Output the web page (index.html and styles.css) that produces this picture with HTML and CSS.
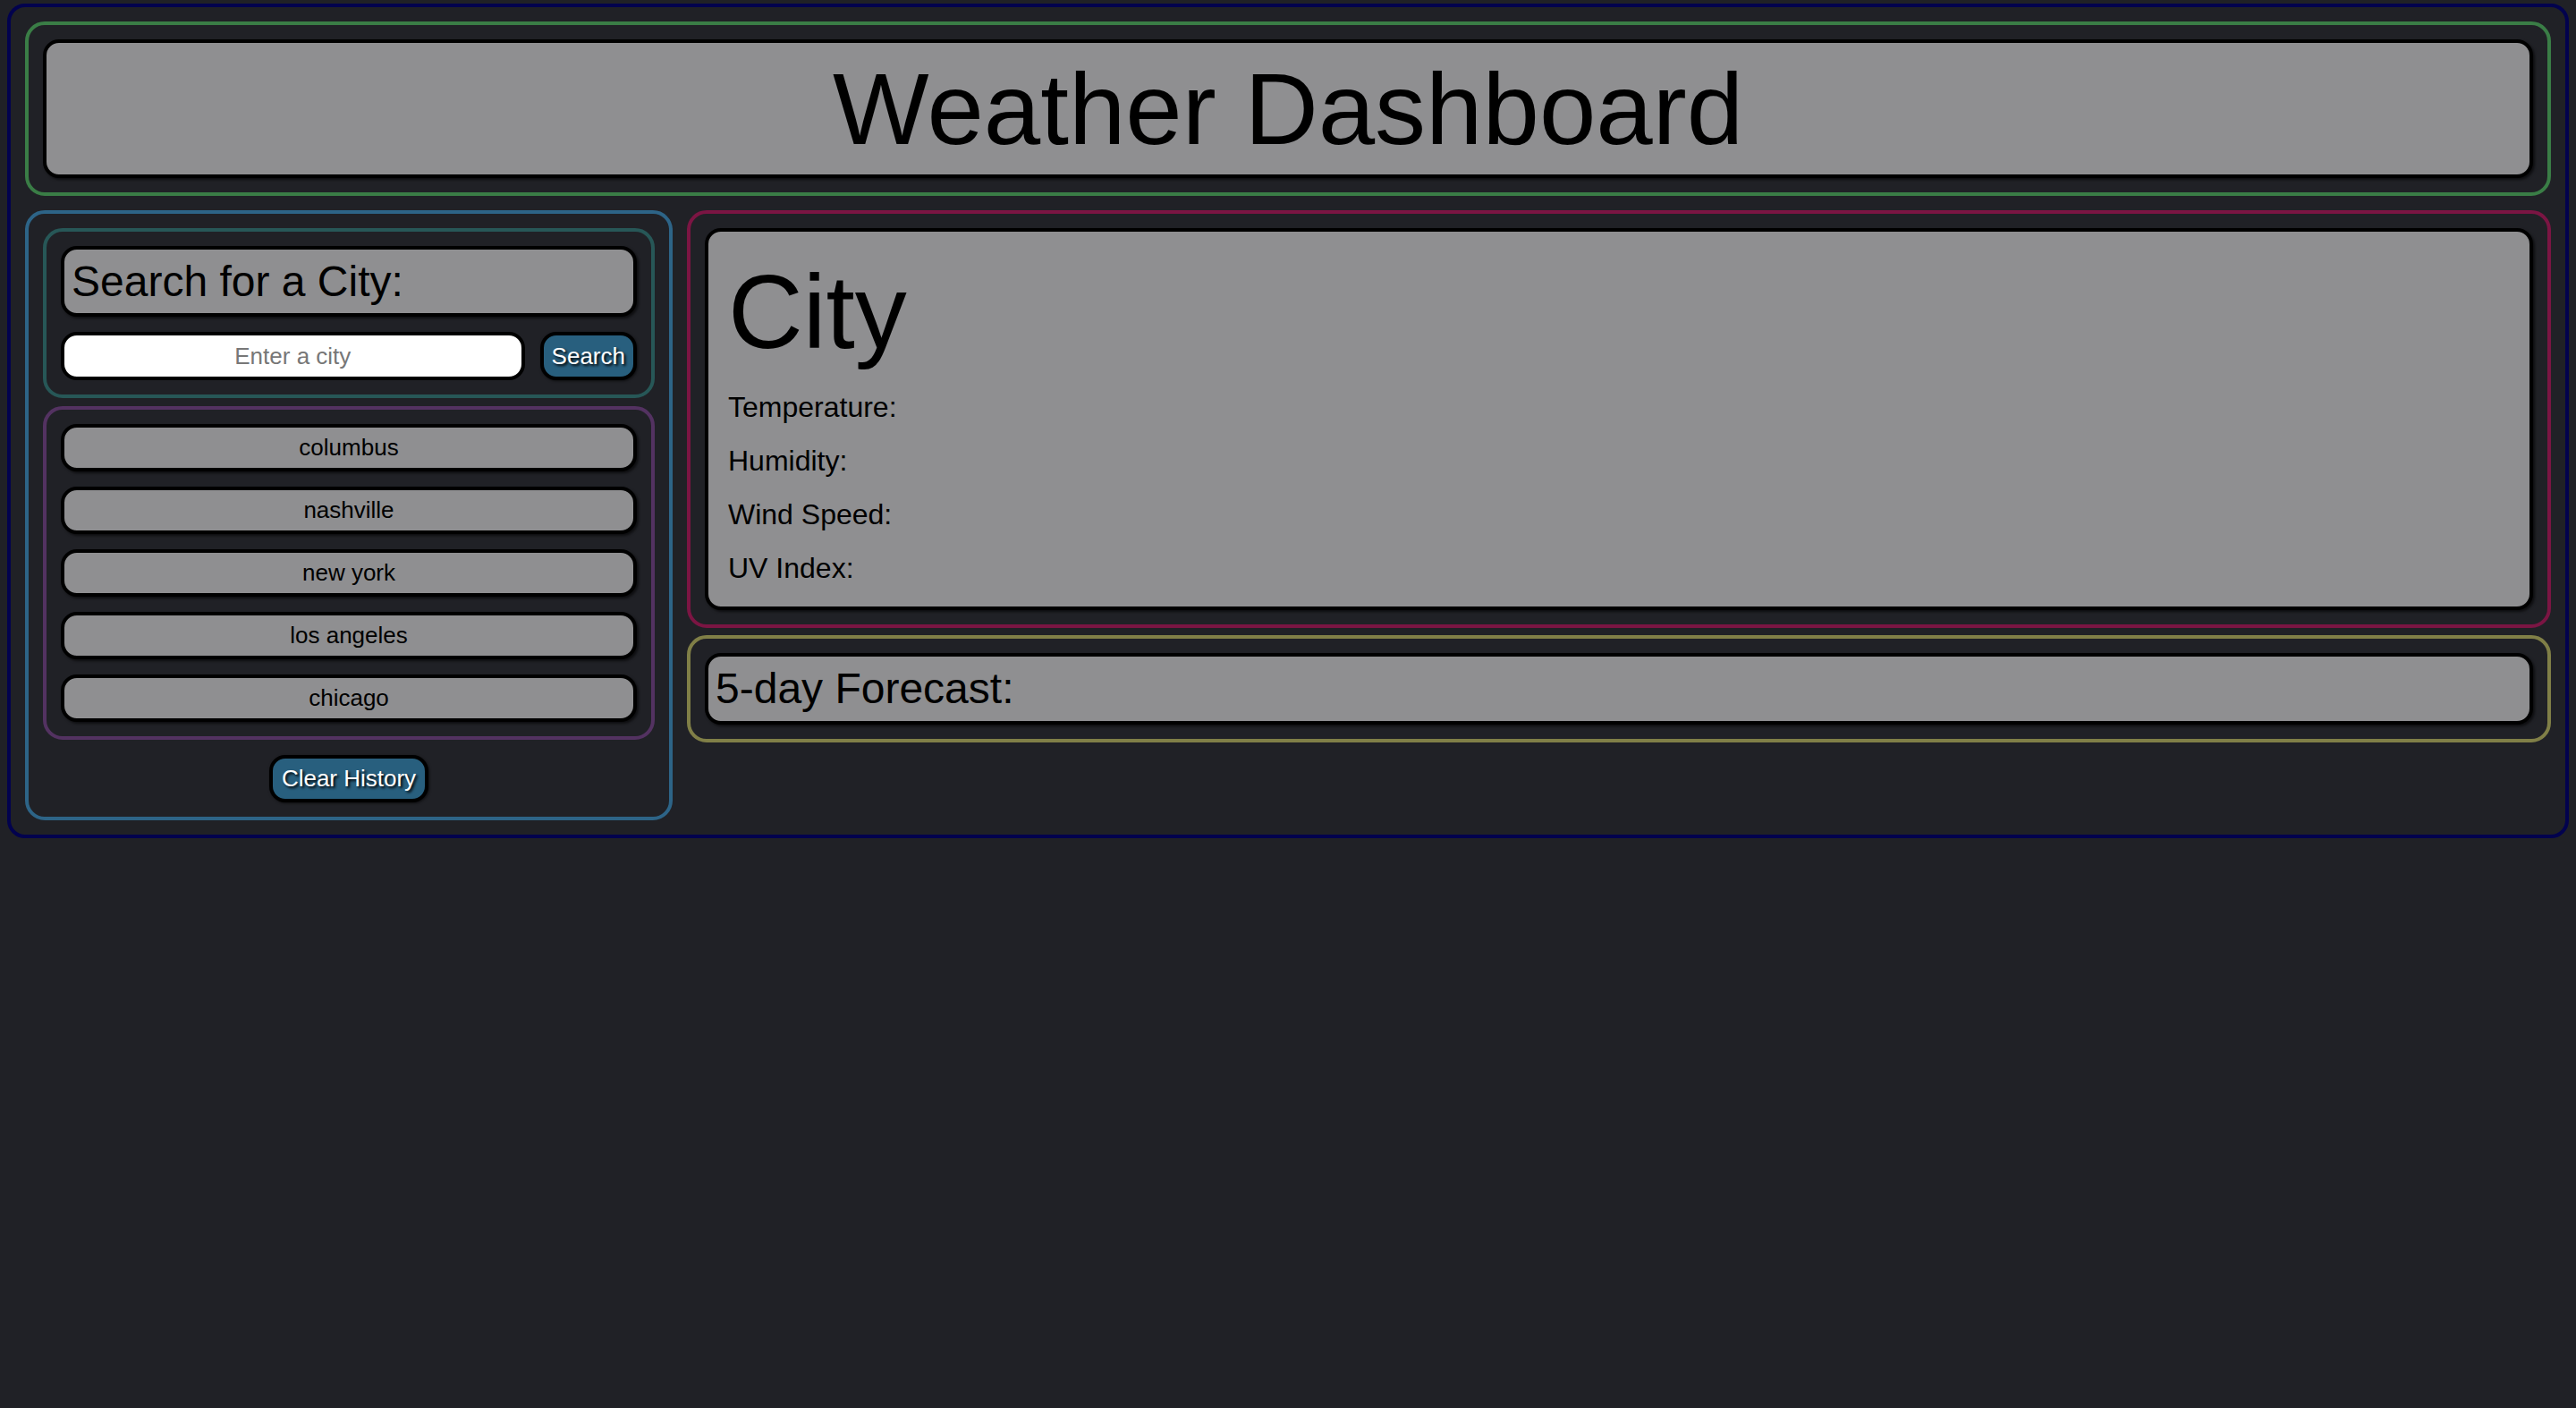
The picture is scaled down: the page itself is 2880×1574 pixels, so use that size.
FILE: index.html
```html
<!DOCTYPE html>
<html lang="en">
<head>
<meta charset="utf-8">
<title>Weather Dashboard</title>
<link rel="stylesheet" href="styles.css">
</head>
<body>
<div class="app">
  <header class="header">
    <h1 class="title">Weather Dashboard</h1>
  </header>
  <div class="content">
    <aside class="sidebar">
      <section class="search">
        <h2 class="panel-heading">Search for a City:</h2>
        <div class="search-row">
          <input class="city-input" type="text" placeholder="Enter a city">
          <button class="btn">Search</button>
        </div>
      </section>
      <section class="history">
        <button class="history-item">columbus</button>
        <button class="history-item">nashville</button>
        <button class="history-item">new york</button>
        <button class="history-item">los angeles</button>
        <button class="history-item">chicago</button>
      </section>
      <button class="btn clear">Clear History</button>
    </aside>
    <main class="main">
      <section class="current">
        <div class="current-card">
          <h1 class="city-name">City</h1>
          <p class="stat">Temperature:</p>
          <p class="stat">Humidity:</p>
          <p class="stat">Wind Speed:</p>
          <p class="stat">UV Index:</p>
        </div>
      </section>
      <section class="forecast">
        <h2 class="panel-heading">5-day Forecast:</h2>
      </section>
    </main>
  </div>
</div>
</body>
</html>
```
FILE: styles.css
```css
* {
  box-sizing: border-box;
}

html {
  background: #202126;
}

body {
  margin: 4px 8px 8px;
  background: #202126;
  font-family: "Liberation Sans", Arial, Helvetica, sans-serif;
  color: #000;
}

.app {
  border: 4px solid #02024e;
  border-radius: 20px;
  padding: 16px;
}

.header {
  border: 4px solid #3a7d46;
  border-radius: 22px;
  padding: 16px;
}

.title {
  margin: 0;
  background: #8f8f91;
  border: 4px solid #000;
  border-radius: 18px;
  box-shadow: 2px 2px 3px rgba(0, 0, 0, 0.6);
  padding: 8px;
  text-align: center;
  font-size: 114px;
  font-weight: normal;
  line-height: 1.15;
}

.content {
  display: flex;
  align-items: flex-start;
  gap: 16px;
  margin-top: 16px;
}

.sidebar {
  flex: none;
  width: 724px;
  border: 4px solid #2d6487;
  border-radius: 22px;
  padding: 16px;
  display: flex;
  flex-direction: column;
}

.search {
  border: 4px solid #275757;
  border-radius: 22px;
  padding: 16px;
}

.panel-heading {
  margin: 0;
  background: #8f8f91;
  border: 4px solid #000;
  border-radius: 18px;
  box-shadow: 2px 2px 3px rgba(0, 0, 0, 0.6);
  padding: 8px;
  font-size: 48px;
  font-weight: normal;
  line-height: 1.15;
}

.search-row {
  display: flex;
  gap: 17px;
  margin-top: 17px;
}

.city-input {
  flex: 1;
  min-width: 0;
  height: 54px;
  border: 4px solid #000;
  border-radius: 18px;
  background: #fff;
  padding: 0 8px;
  font-family: "Liberation Sans", Arial, Helvetica, sans-serif;
  font-size: 26px;
  text-align: center;
  outline: none;
}

.city-input::placeholder {
  color: #777;
}

.btn {
  font-family: "Liberation Sans", Arial, Helvetica, sans-serif;
  font-size: 26px;
  line-height: 30px;
  color: #fff;
  background: #285f7e;
  border: 4px solid #000;
  border-radius: 18px;
  padding: 8px 9px;
  text-shadow: 2px 2px 3px #000;
  box-shadow: 1px 1px 3px rgba(0, 0, 0, 0.6);
}

.history {
  margin-top: 9px;
  border: 4px solid #533261;
  border-radius: 22px;
  padding: 16px;
  display: flex;
  flex-direction: column;
  gap: 17px;
}

.history-item {
  font-family: "Liberation Sans", Arial, Helvetica, sans-serif;
  font-size: 26px;
  line-height: 29px;
  color: #000;
  background: #8f8f91;
  border: 4px solid #000;
  border-radius: 18px;
  box-shadow: 2px 2px 3px rgba(0, 0, 0, 0.6);
  padding: 8px;
  text-align: center;
}

.clear {
  align-self: center;
  margin-top: 17px;
  padding: 8px 10px;
  line-height: 29px;
}

.main {
  flex: 1;
  min-width: 0;
  display: flex;
  flex-direction: column;
  gap: 8px;
}

.current {
  border: 4px solid #7b1543;
  border-radius: 22px;
  padding: 16px;
}

.current-card {
  background: #8f8f91;
  border: 4px solid #000;
  border-radius: 18px;
  box-shadow: 2px 2px 3px rgba(0, 0, 0, 0.6);
  padding: 16px 22px 13px;
}

.city-name {
  margin: 8px 0 9px;
  font-size: 116px;
  font-weight: normal;
  line-height: 1.15;
}

.stat {
  margin: 0;
  font-size: 32px;
  line-height: 60px;
}

.forecast {
  border: 4px solid #807f47;
  border-radius: 22px;
  padding: 16px;
}
```
